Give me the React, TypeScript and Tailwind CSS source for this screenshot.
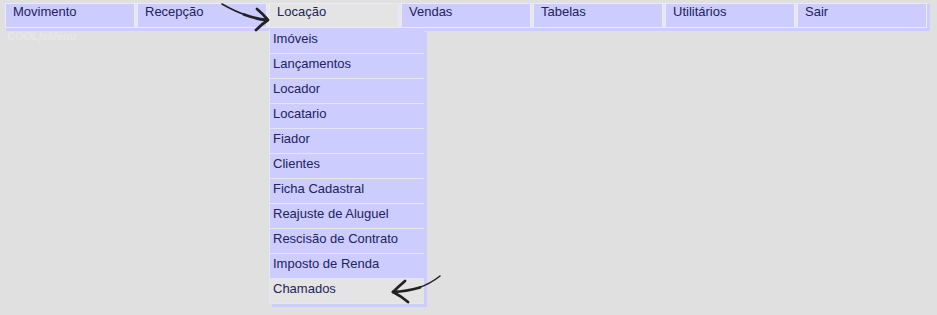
import React from "react";

const top = ["Movimento", "Recepção", "Locação", "Vendas", "Tabelas", "Utilitários", "Sair"];
const sub = [
  "Imóveis",
  "Lançamentos",
  "Locador",
  "Locatario",
  "Fiador",
  "Clientes",
  "Ficha Cadastral",
  "Reajuste de Aluguel",
  "Rescisão de Contrato",
  "Imposto de Renda",
  "Chamados",
];

export default function App() {
  return (
    <div
      className="relative w-[937px] h-[315px] overflow-hidden bg-[#e0e0e0] text-[#22225e]"
      style={{ fontFamily: '"Liberation Sans", Arial, sans-serif' }}
    >
      <div className="pt-[3px] pl-[5px]">
        <div className="flex w-[922px] gap-[2px] bg-[#e6e6ee] shadow-[2px_2px_0_1px_#ccccff]">
          {top.map((t) => (
            <div
              key={t}
              className={`w-[130px] h-[25px] border border-[#ebebf5] pl-[7px] text-[13px] leading-[15px] ${
                t === "Locação" ? "bg-[#e4e4e4] border-[#e4e4e4]" : "bg-[#ccccff]"
              }`}
            >
              {t}
            </div>
          ))}
        </div>
        <div className="mt-[2px] pl-[2px] text-[11px] font-bold italic leading-[12px] text-[#e7e7e7]">
          COOLjsMenu
        </div>
      </div>

      <div className="absolute left-[269px] top-[29px] flex w-[155px] flex-col shadow-[3px_3px_0_0_#ccccff]">
        {sub.map((s) => (
          <div
            key={s}
            className={`h-[25px] border-b border-l border-[#e6e6f2] pl-[3px] pt-[2px] text-[13px] leading-[15px] ${
              s === "Chamados" ? "bg-[#e4e4e4]" : "bg-[#ccccff]"
            }`}
          >
            {s}
          </div>
        ))}
      </div>

      <svg className="absolute left-0 top-0 pointer-events-none" width="937" height="315" viewBox="0 0 937 315">
        <g fill="none" stroke="#222" strokeLinecap="round" strokeLinejoin="round">
          <path d="M222 4 Q236 12 246 15" strokeWidth="1.6" />
          <path d="M244 14.5 Q256 19 267 20" strokeWidth="2.8" />
          <path d="M257 9 Q263 14 268 20 Q262 24 256 30" strokeWidth="2.8" />
          <path d="M440 276 Q430 284 418 288" strokeWidth="1.6" />
          <path d="M420 287.5 Q406 291.5 393 292" strokeWidth="2.8" />
          <path d="M405 281 Q398 287 393 292 Q401 296 408 302" strokeWidth="2.8" />
        </g>
      </svg>
    </div>
  );
}
